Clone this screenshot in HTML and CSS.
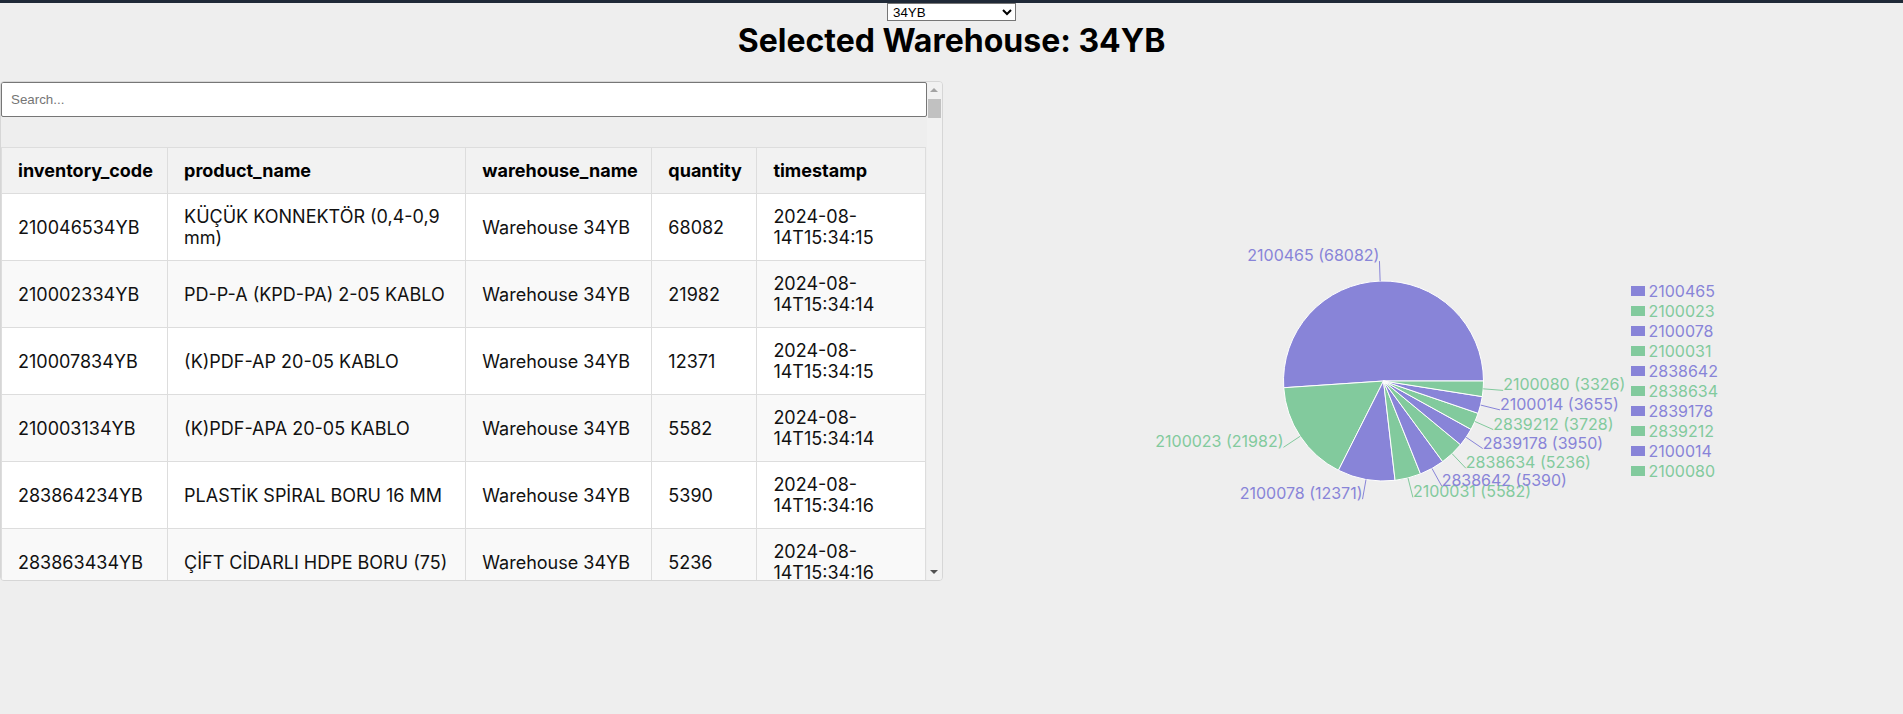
FILE: index.html
```html
<!DOCTYPE html>
<html lang="tr">
<head>
<meta charset="utf-8">
<title>Warehouse Inventory</title>
<link rel="stylesheet" href="styles.css">
</head>
<body>
<div class="topbar"></div>
<div class="selector-row">
  <select class="warehouse-select">
    <option>34YB</option>
  </select>
</div>
<h1 class="title">Selected Warehouse: 34YB</h1>
<main class="content">
  <section class="table-panel">
    <div class="table-scroll">
      <input class="search" type="text" placeholder="Search...">
      <table class="inv-table">
        <colgroup>
          <col class="c-code">
          <col class="c-name">
          <col class="c-wh">
          <col class="c-qty">
          <col class="c-ts">
        </colgroup>
        <thead>
          <tr>
            <th>inventory_code</th>
            <th>product_name</th>
            <th>warehouse_name</th>
            <th>quantity</th>
            <th>timestamp</th>
          </tr>
        </thead>
        <tbody>
          <tr><td>210046534YB</td><td>KÜÇÜK KONNEKTÖR (0,4-0,9 mm)</td><td>Warehouse 34YB</td><td>68082</td><td>2024-08-14T15:34:15</td></tr>
          <tr><td>210002334YB</td><td>PD-P-A (KPD-PA) 2-05 KABLO</td><td>Warehouse 34YB</td><td>21982</td><td>2024-08-14T15:34:14</td></tr>
          <tr><td>210007834YB</td><td>(K)PDF-AP 20-05 KABLO</td><td>Warehouse 34YB</td><td>12371</td><td>2024-08-14T15:34:15</td></tr>
          <tr><td>210003134YB</td><td>(K)PDF-APA 20-05 KABLO</td><td>Warehouse 34YB</td><td>5582</td><td>2024-08-14T15:34:14</td></tr>
          <tr><td>283864234YB</td><td>PLASTİK SPİRAL BORU 16 MM</td><td>Warehouse 34YB</td><td>5390</td><td>2024-08-14T15:34:16</td></tr>
          <tr><td>283863434YB</td><td>ÇİFT CİDARLI HDPE BORU (75)</td><td>Warehouse 34YB</td><td>5236</td><td>2024-08-14T15:34:16</td></tr>
        </tbody>
      </table>
    </div>
    <div class="scrollbar" aria-hidden="true">
      <span class="sb-btn"><span class="arrow-up"></span></span>
      <span class="sb-thumb"></span>
      <span class="sb-track"></span>
      <span class="sb-btn"><span class="arrow-down"></span></span>
    </div>
  </section>
  <section class="chart-panel">
    <svg class="pie" width="668" height="600" viewBox="0 0 668 600">
      <g class="sectors">
        <path fill="#8884d8" d="M520.5,300 A100,100 0 1 0 320.727,306.740 L420.5,300 Z"/>
        <path fill="#82ca9d" d="M320.727,306.740 A100,100 0 0 0 375.460,389.283 L420.5,300 Z"/>
        <path fill="#8884d8" d="M375.460,389.283 A100,100 0 0 0 432.063,399.332 L420.5,300 Z"/>
        <path fill="#82ca9d" d="M432.063,399.332 A100,100 0 0 0 457.499,392.905 L420.5,300 Z"/>
        <path fill="#8884d8" d="M457.499,392.905 A100,100 0 0 0 479.661,380.624 L420.5,300 Z"/>
        <path fill="#82ca9d" d="M479.661,380.624 A100,100 0 0 0 497.566,363.729 L420.5,300 Z"/>
        <path fill="#8884d8" d="M497.566,363.729 A100,100 0 0 0 508.029,348.361 L420.5,300 Z"/>
        <path fill="#82ca9d" d="M508.029,348.361 A100,100 0 0 0 515.136,332.315 L420.5,300 Z"/>
        <path fill="#8884d8" d="M515.136,332.315 A100,100 0 0 0 519.274,315.612 L420.5,300 Z"/>
        <path fill="#82ca9d" d="M519.274,315.612 A100,100 0 0 0 520.5,300 L420.5,300 Z"/>
      </g>
      <g class="labels">
        <polyline class="lp" points="417.128,200.057 416.454,180.068"/>
        <text class="tp" x="416.454" y="180.068" text-anchor="end">2100465 (68082)</text>
        <polyline class="lg" points="337.157,355.263 320.488,366.316"/>
        <text class="tg" x="320.488" y="366.316" text-anchor="end">2100023 (21982)</text>
        <polyline class="lp" points="403.023,398.461 399.528,418.153"/>
        <text class="tp" x="399.528" y="418.153" text-anchor="end">2100078 (12371)</text>
        <polyline class="lg" points="444.992,396.955 449.890,416.346"/>
        <text class="tg" x="449.890" y="416.346">2100031 (5582)</text>
        <polyline class="lp" points="468.970,387.468 478.664,404.962"/>
        <text class="tp" x="478.664" y="404.962">2838642 (5390)</text>
        <polyline class="lg" points="489.134,372.728 502.861,387.274"/>
        <text class="tg" x="502.861" y="387.274">2838634 (5236)</text>
        <polyline class="lp" points="503.155,356.288 519.686,367.546"/>
        <text class="tp" x="519.686" y="367.546">2839178 (3950)</text>
        <polyline class="lg" points="511.935,340.494 530.222,348.593"/>
        <text class="tg" x="530.222" y="348.593">2839212 (3728)</text>
        <polyline class="lp" points="517.565,324.053 536.978,328.864"/>
        <text class="tp" x="536.978" y="328.864">2100014 (3655)</text>
        <polyline class="lg" points="520.193,307.831 540.132,309.397"/>
        <text class="tg" x="540.132" y="309.397">2100080 (3326)</text>
      </g>
    </svg>
    <ul class="legend">
      <li class="purple"><span class="swatch"></span><span>2100465</span></li>
      <li class="green"><span class="swatch"></span><span>2100023</span></li>
      <li class="purple"><span class="swatch"></span><span>2100078</span></li>
      <li class="green"><span class="swatch"></span><span>2100031</span></li>
      <li class="purple"><span class="swatch"></span><span>2838642</span></li>
      <li class="green"><span class="swatch"></span><span>2838634</span></li>
      <li class="purple"><span class="swatch"></span><span>2839178</span></li>
      <li class="green"><span class="swatch"></span><span>2839212</span></li>
      <li class="purple"><span class="swatch"></span><span>2100014</span></li>
      <li class="green"><span class="swatch"></span><span>2100080</span></li>
    </ul>
  </section>
</main>
</body>
</html>
```

FILE: styles.css
```css
* {
  box-sizing: border-box;
}

html, body {
  margin: 0;
  padding: 0;
}

body {
  background: #eeeeee;
  font-family: Inter, "Noto Sans", sans-serif;
  color: #000;
}

.topbar {
  height: 3px;
  background: #1f2937;
}

.selector-row {
  display: flex;
  justify-content: center;
}

.warehouse-select {
  width: 129px;
  height: 18px;
  font-family: "Liberation Sans", Arial, sans-serif;
  font-size: 13.33px;
  color: #000;
  background: #fff;
  border: 1px solid #767676;
  border-radius: 0;
  padding: 0 0 0 1px;
}

.title {
  margin: 0 0 21px;
  text-align: center;
  font-size: 32px;
  font-weight: 700;
  line-height: 39px;
}

.content {
  display: flex;
  align-items: flex-start;
  gap: 20px;
}

.table-panel {
  flex: 1 1 0;
  min-width: 0;
  height: 500px;
  display: flex;
  overflow: hidden;
  border: 1px solid #d6d6d6;
  border-radius: 4px;
}

.table-scroll {
  flex: 1 1 0;
  min-width: 0;
  overflow-y: auto;
}

.scrollbar {
  flex: none;
  width: 15px;
  display: flex;
  flex-direction: column;
  background: #f1f1f1;
}

.sb-btn {
  flex: none;
  height: 16px;
  display: flex;
  align-items: center;
  justify-content: center;
}

.sb-thumb {
  flex: none;
  height: 19px;
  margin: 1px 1px 0;
  background: #c1c1c1;
}

.sb-track {
  flex: 1 1 auto;
}

.arrow-up {
  width: 0;
  height: 0;
  border-left: 4px solid transparent;
  border-right: 4px solid transparent;
  border-bottom: 4px solid #a3a3a3;
}

.arrow-down {
  width: 0;
  height: 0;
  border-left: 4px solid transparent;
  border-right: 4px solid transparent;
  border-top: 4px solid #505050;
}

.search {
  display: block;
  width: 100%;
  height: 35px;
  margin: 0 0 30px;
  padding: 8px 9px;
  font-family: "Liberation Sans", Arial, sans-serif;
  font-size: 13.33px;
  color: #000;
  background: #fff;
  border: 1px solid #767676;
  border-radius: 2px;
}

.search::placeholder {
  color: #757575;
}

.inv-table {
  width: calc(100% - 1px);
  border-collapse: collapse;
  table-layout: fixed;
  font-size: 18px;
}

.c-code { width: 166px; }
.c-name { width: 298px; }
.c-wh { width: 186px; }
.c-qty { width: 105px; }
.c-ts { width: 168px; }

.inv-table th,
.inv-table td {
  border: 1px solid #dddddd;
  padding: 12px 16px;
  line-height: 21px;
  text-align: left;
  vertical-align: middle;
}

.inv-table th {
  background: #f2f2f2;
  font-weight: 700;
  color: #000;
}

.inv-table td {
  background: #ffffff;
  color: #111;
}

.inv-table tbody tr:nth-child(even) td {
  background: #f9f9f9;
}

.chart-panel {
  flex: 1 1 0;
  min-width: 0;
  height: 600px;
  display: flex;
  align-items: center;
}

.pie {
  flex: none;
  display: block;
  font-family: Inter, "Noto Sans", sans-serif;
  font-size: 16px;
}

.sectors path {
  stroke: #ffffff;
  stroke-width: 1;
}

.labels polyline {
  fill: none;
  stroke-width: 1;
}

.labels .lp { stroke: #8884d8; }
.labels .lg { stroke: #82ca9d; }
.labels .tp { fill: #8884d8; }
.labels .tg { fill: #82ca9d; }

.legend {
  list-style: none;
  margin: 0;
  padding: 0;
  font-size: 16px;
}

.legend li {
  display: flex;
  align-items: center;
  height: 20px;
}

.legend .swatch {
  display: inline-block;
  width: 14px;
  height: 10.5px;
  margin-right: 4px;
  background: currentColor;
}

.legend .purple { color: #8884d8; }
.legend .green { color: #82ca9d; }
```
